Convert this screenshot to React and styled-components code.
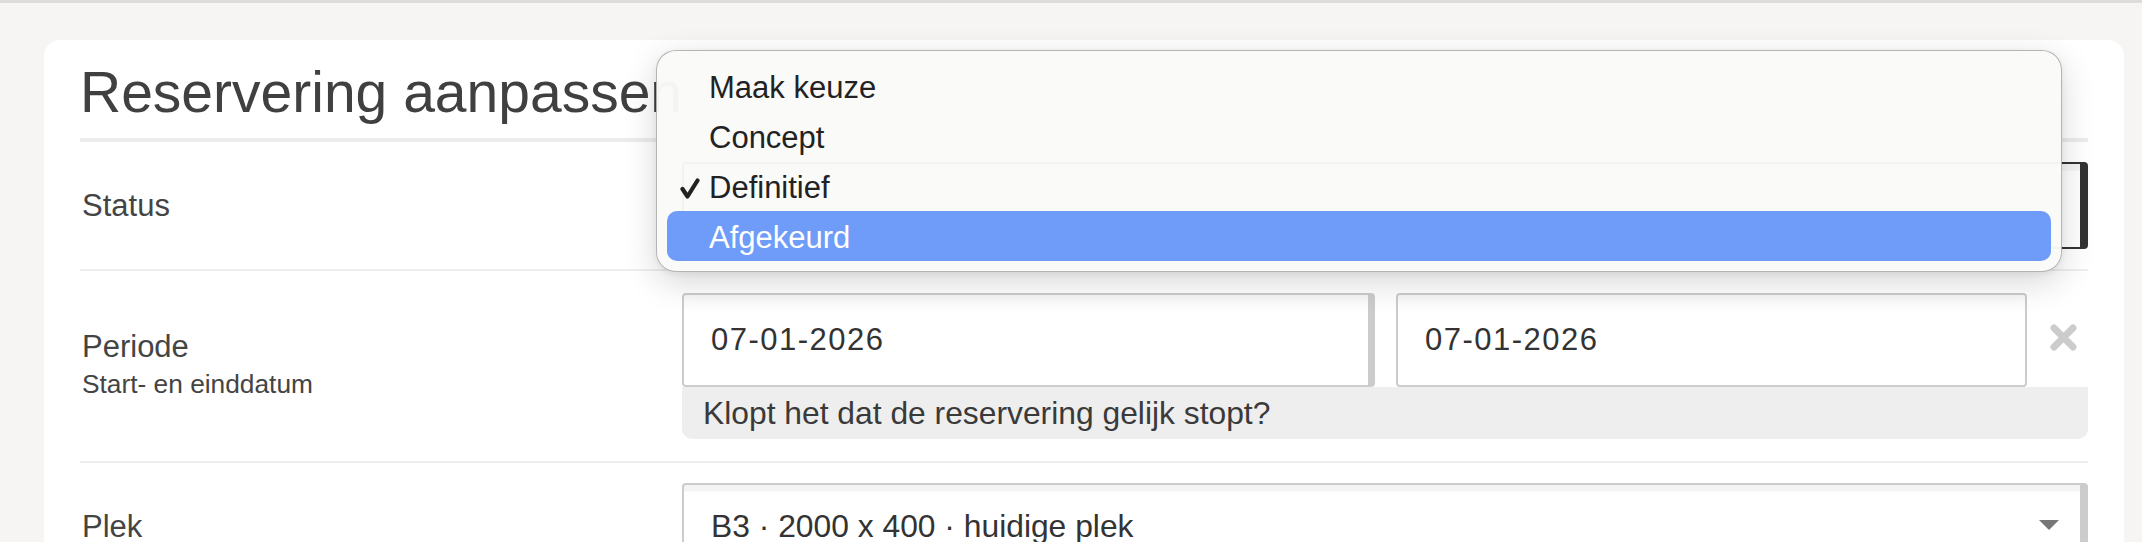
import React from "react";
import styled, { createGlobalStyle } from "styled-components";

const GlobalStyle = createGlobalStyle`
  html, body {
    margin: 0;
    height: 542px;
    overflow: hidden;
    background: #f6f5f3;
    font-family: "Liberation Sans", Arial, sans-serif;
  }
`;

const TopBar = styled.div`
  height: 3px;
  background: #dcdcdc;
`;

const Card = styled.div`
  position: relative;
  margin: 37px 18px 0 44px;
  padding: 0 36px 40px;
  background: #fff;
  border-radius: 16px;
`;

const Title = styled.h1`
  margin: 0;
  padding: 18px 0 12px;
  font-size: 57px;
  line-height: 68px;
  font-weight: 400;
  color: #404040;
  border-bottom: 4px solid #ececec;
  white-space: nowrap;
`;

const Row = styled.div`
  display: flex;
  align-items: center;
  padding: ${(p) => p.$pad}px 0;
  border-bottom: 2px solid #eeeeee;
`;

const LabelCol = styled.div`
  flex: 0 0 602px;
  color: #444;
`;

const Label = styled.div`
  font-size: 31px;
  line-height: 36px;
  padding-left: 2px;
`;

const SubLabel = styled.div`
  font-size: 26.3px;
  line-height: 38px;
  padding-left: 2px;
`;

const FieldCol = styled.div`
  flex: 1;
  min-width: 0;
`;

const Select = styled.div`
  position: relative;
  box-sizing: border-box;
  height: 87px;
  display: flex;
  align-items: center;
  padding: 0 27px;
  font-size: 31.8px;
  color: #333;
  background: linear-gradient(#f4f4f4 0, #f4f4f4 6px, #fff 7px);
  border: 2px solid ${(p) => (p.$focused ? "#333" : "#cccccc")};
  border-right-width: 8px;
  border-radius: 4px;
`;

const Arrow = styled.svg`
  position: absolute;
  right: 21px;
  top: 35px;
`;

const DateLine = styled.div`
  display: flex;
  align-items: center;
`;

const DateBox = styled.div`
  box-sizing: border-box;
  flex: 0 0 ${(p) => p.$w}px;
  height: 94px;
  display: flex;
  align-items: center;
  padding: 0 27px;
  font-size: 31px;
  letter-spacing: 1.5px;
  color: #333;
  background: linear-gradient(#f7f7f7, #fff 14px);
  border: 2px solid #cccccc;
  border-right-width: ${(p) => p.$rb}px;
  border-radius: 4px;
  margin-right: ${(p) => p.$mr}px;
`;

const ClearIcon = styled.svg`
  flex: 0 0 auto;
  margin-top: -6px;
`;

const Warning = styled.div`
  height: 52px;
  display: flex;
  align-items: center;
  padding: 0 21px;
  font-size: 31.8px;
  color: #3a3a3a;
  background: #eeeeee;
  border-radius: 0 0 10px 10px;
`;

const Menu = styled.div`
  position: absolute;
  z-index: 10;
  left: 612px;
  top: 10px;
  width: 1406px;
  box-sizing: border-box;
  padding: 10px 10px;
  background: rgba(250, 250, 249, 0.97);
  border: 1px solid rgba(0, 0, 0, 0.28);
  border-radius: 20px;
  box-shadow: 0 10px 34px rgba(0, 0, 0, 0.16), 0 2px 6px rgba(0, 0, 0, 0.06);
`;

const Option = styled.div`
  position: relative;
  box-sizing: border-box;
  height: 50px;
  padding: 4px 0 0 42px;
  font-size: 31px;
  line-height: 46px;
  color: ${(p) => (p.$active ? "#fff" : "#222")};
  background: ${(p) => (p.$active ? "#6f9cf8" : "transparent")};
  border-radius: 10px;
`;

const Check = styled.svg`
  position: absolute;
  left: 13px;
  top: 17px;
`;

const options = ["Maak keuze", "Concept", "Definitief", "Afgekeurd"];

export default function App() {
  return (
    <>
      <GlobalStyle />
      <TopBar />
      <Card>
        <Title>Reservering aanpassen</Title>

        <Row $pad={20}>
          <LabelCol>
            <Label>Status</Label>
          </LabelCol>
          <FieldCol>
            <Select $focused />
          </FieldCol>
        </Row>

        <Row $pad={22}>
          <LabelCol>
            <Label>Periode</Label>
            <SubLabel>Start- en einddatum</SubLabel>
          </LabelCol>
          <FieldCol>
            <DateLine>
              <DateBox $w={693} $rb={7} $mr={21}>
                07-01-2026
              </DateBox>
              <DateBox $w={631} $rb={2} $mr={23}>
                07-01-2026
              </DateBox>
              <ClearIcon width="27" height="27" viewBox="0 0 27 27">
                <path
                  d="M4 4 L23 23 M23 4 L4 23"
                  stroke="#cccccc"
                  strokeWidth="7"
                  strokeLinecap="round"
                  fill="none"
                />
              </ClearIcon>
            </DateLine>
            <Warning>Klopt het dat de reservering gelijk stopt?</Warning>
          </FieldCol>
        </Row>

        <Row $pad={20}>
          <LabelCol>
            <Label>Plek</Label>
          </LabelCol>
          <FieldCol>
            <Select>
              B3 · 2000 x 400 · huidige plek
              <Arrow width="20" height="10" viewBox="0 0 20 10">
                <polygon points="0,0 20,0 10,10" fill="#777" />
              </Arrow>
            </Select>
          </FieldCol>
        </Row>

        <Menu>
          {options.map((o) => (
            <Option key={o} $active={o === "Afgekeurd"}>
              {o === "Definitief" && (
                <Check width="20" height="21" viewBox="0 0 20 21">
                  <polyline
                    points="2.5,11 7.5,18.5 17.5,2.5"
                    stroke="#222"
                    strokeWidth="4.2"
                    fill="none"
                    strokeLinecap="round"
                    strokeLinejoin="round"
                  />
                </Check>
              )}
              {o}
            </Option>
          ))}
        </Menu>
      </Card>
    </>
  );
}
